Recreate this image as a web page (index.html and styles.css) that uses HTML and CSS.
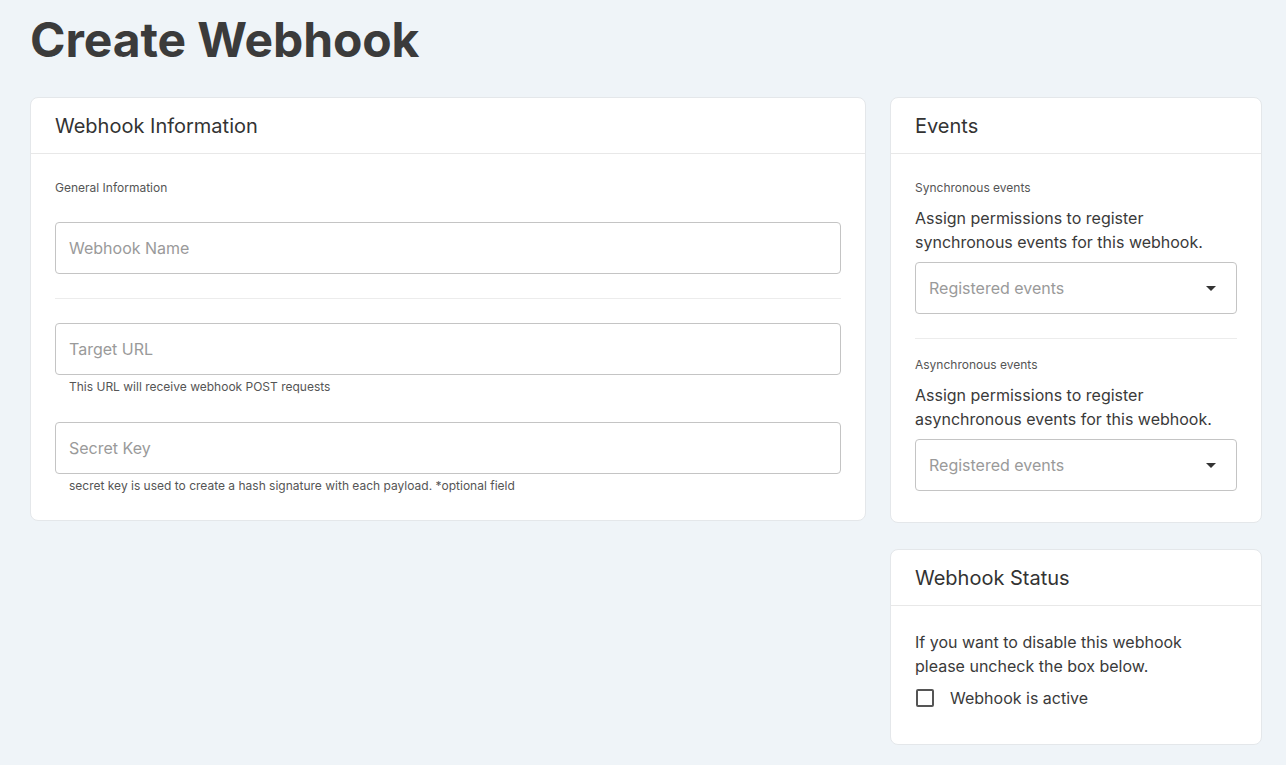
FILE: index.html
```html
<!DOCTYPE html>
<html lang="en">
<head>
<meta charset="utf-8">
<title>Create Webhook</title>
<link rel="stylesheet" href="styles.css">
</head>
<body>
<div class="page">
  <h1 class="page-title">Create Webhook</h1>
  <div class="layout">
    <section class="card card-main">
      <header class="card-header">Webhook Information</header>
      <div class="card-body">
        <div class="section-label">General Information</div>
        <div class="field field-first">
          <div class="input"><span class="placeholder">Webhook Name</span></div>
        </div>
        <hr class="divider">
        <div class="field">
          <div class="input"><span class="placeholder">Target URL</span></div>
          <div class="helper">This URL will receive webhook POST requests</div>
        </div>
        <div class="field field-gap">
          <div class="input"><span class="placeholder">Secret Key</span></div>
          <div class="helper">secret key is used to create a hash signature with each payload. *optional field</div>
        </div>
      </div>
    </section>
    <div class="side">
      <section class="card card-events">
        <header class="card-header">Events</header>
        <div class="card-body">
          <div class="section-label">Synchronous events</div>
          <p class="text">Assign permissions to register synchronous events for this webhook.</p>
          <div class="input select"><span class="placeholder">Registered events</span><span class="caret"></span></div>
          <hr class="divider divider-tight">
          <div class="section-label">Asynchronous events</div>
          <p class="text">Assign permissions to register asynchronous events for this webhook.</p>
          <div class="input select"><span class="placeholder">Registered events</span><span class="caret"></span></div>
        </div>
      </section>
      <section class="card card-status">
        <header class="card-header">Webhook Status</header>
        <div class="card-body">
          <p class="text status-text">If you want to disable this webhook please uncheck the box below.</p>
          <label class="check-row"><span class="checkbox"></span><span class="check-label">Webhook is active</span></label>
        </div>
      </section>
    </div>
  </div>
</div>
</body>
</html>
```
FILE: styles.css
```css
* { box-sizing: border-box; }
html, body { margin: 0; padding: 0; }
body {
  background: #eff4f8;
  font-family: Inter, "Noto Sans", "Liberation Sans", sans-serif;
  color: #3a3a3a;
}
.page { padding: 11px 24px 0 30px; }
.page-title {
  margin: 0;
  font-size: 48px;
  line-height: 58px;
  font-weight: 700;
  color: #3b3b3b;
  letter-spacing: -0.1px;
}
.layout {
  margin-top: 28px;
  display: grid;
  grid-template-columns: 836px 372px;
  column-gap: 24px;
  align-items: start;
}
.side { display: flex; flex-direction: column; gap: 26px; }
.card {
  background: #fff;
  border: 1px solid #e4e7ea;
  border-radius: 8px;
}
.card-header {
  padding: 16px 24px 15px;
  font-size: 20px;
  line-height: 24px;
  font-weight: 400;
  color: #333;
  border-bottom: 1px solid #e8e8e8;
}
.card-body { padding: 24px 24px 24px; }
.card-events .card-body { padding-bottom: 31px; }
.card-status .card-body { padding-bottom: 34px; }
.section-label {
  font-size: 12px;
  line-height: 20px;
  color: #555;
}
.field-first { margin-top: 24px; }
.field-gap { margin-top: 25px; }
.input {
  height: 52px;
  border: 1px solid #c4c4c4;
  border-radius: 4px;
  display: flex;
  align-items: center;
  padding: 0 13px;
}
.placeholder {
  font-size: 16px;
  color: #9a9a9a;
}
.helper {
  margin: 2px 14px 0;
  font-size: 12px;
  line-height: 20px;
  color: #555;
}
.divider {
  border: 0;
  border-top: 1px solid #ececec;
  margin: 24px 0;
}
.divider-tight { margin-bottom: 16px; }
.text {
  margin: 8px 0 8px;
  font-size: 16px;
  line-height: 24px;
  color: #3a3a3a;
}
.card-status .text { margin: 0 0 8px; }
.status-text { max-width: 300px; }
.select { justify-content: space-between; padding-right: 20px; }
.caret {
  width: 0; height: 0;
  border-left: 5px solid transparent;
  border-right: 5px solid transparent;
  border-top: 5px solid #333;
}
.check-row {
  display: flex;
  align-items: center;
  height: 24px;
}
.checkbox {
  width: 18px; height: 18px;
  margin-left: 1px;
  border: 2px solid #555;
  border-radius: 2px;
}
.check-label {
  margin-left: 16px;
  font-size: 16px;
  color: #3a3a3a;
}
```
